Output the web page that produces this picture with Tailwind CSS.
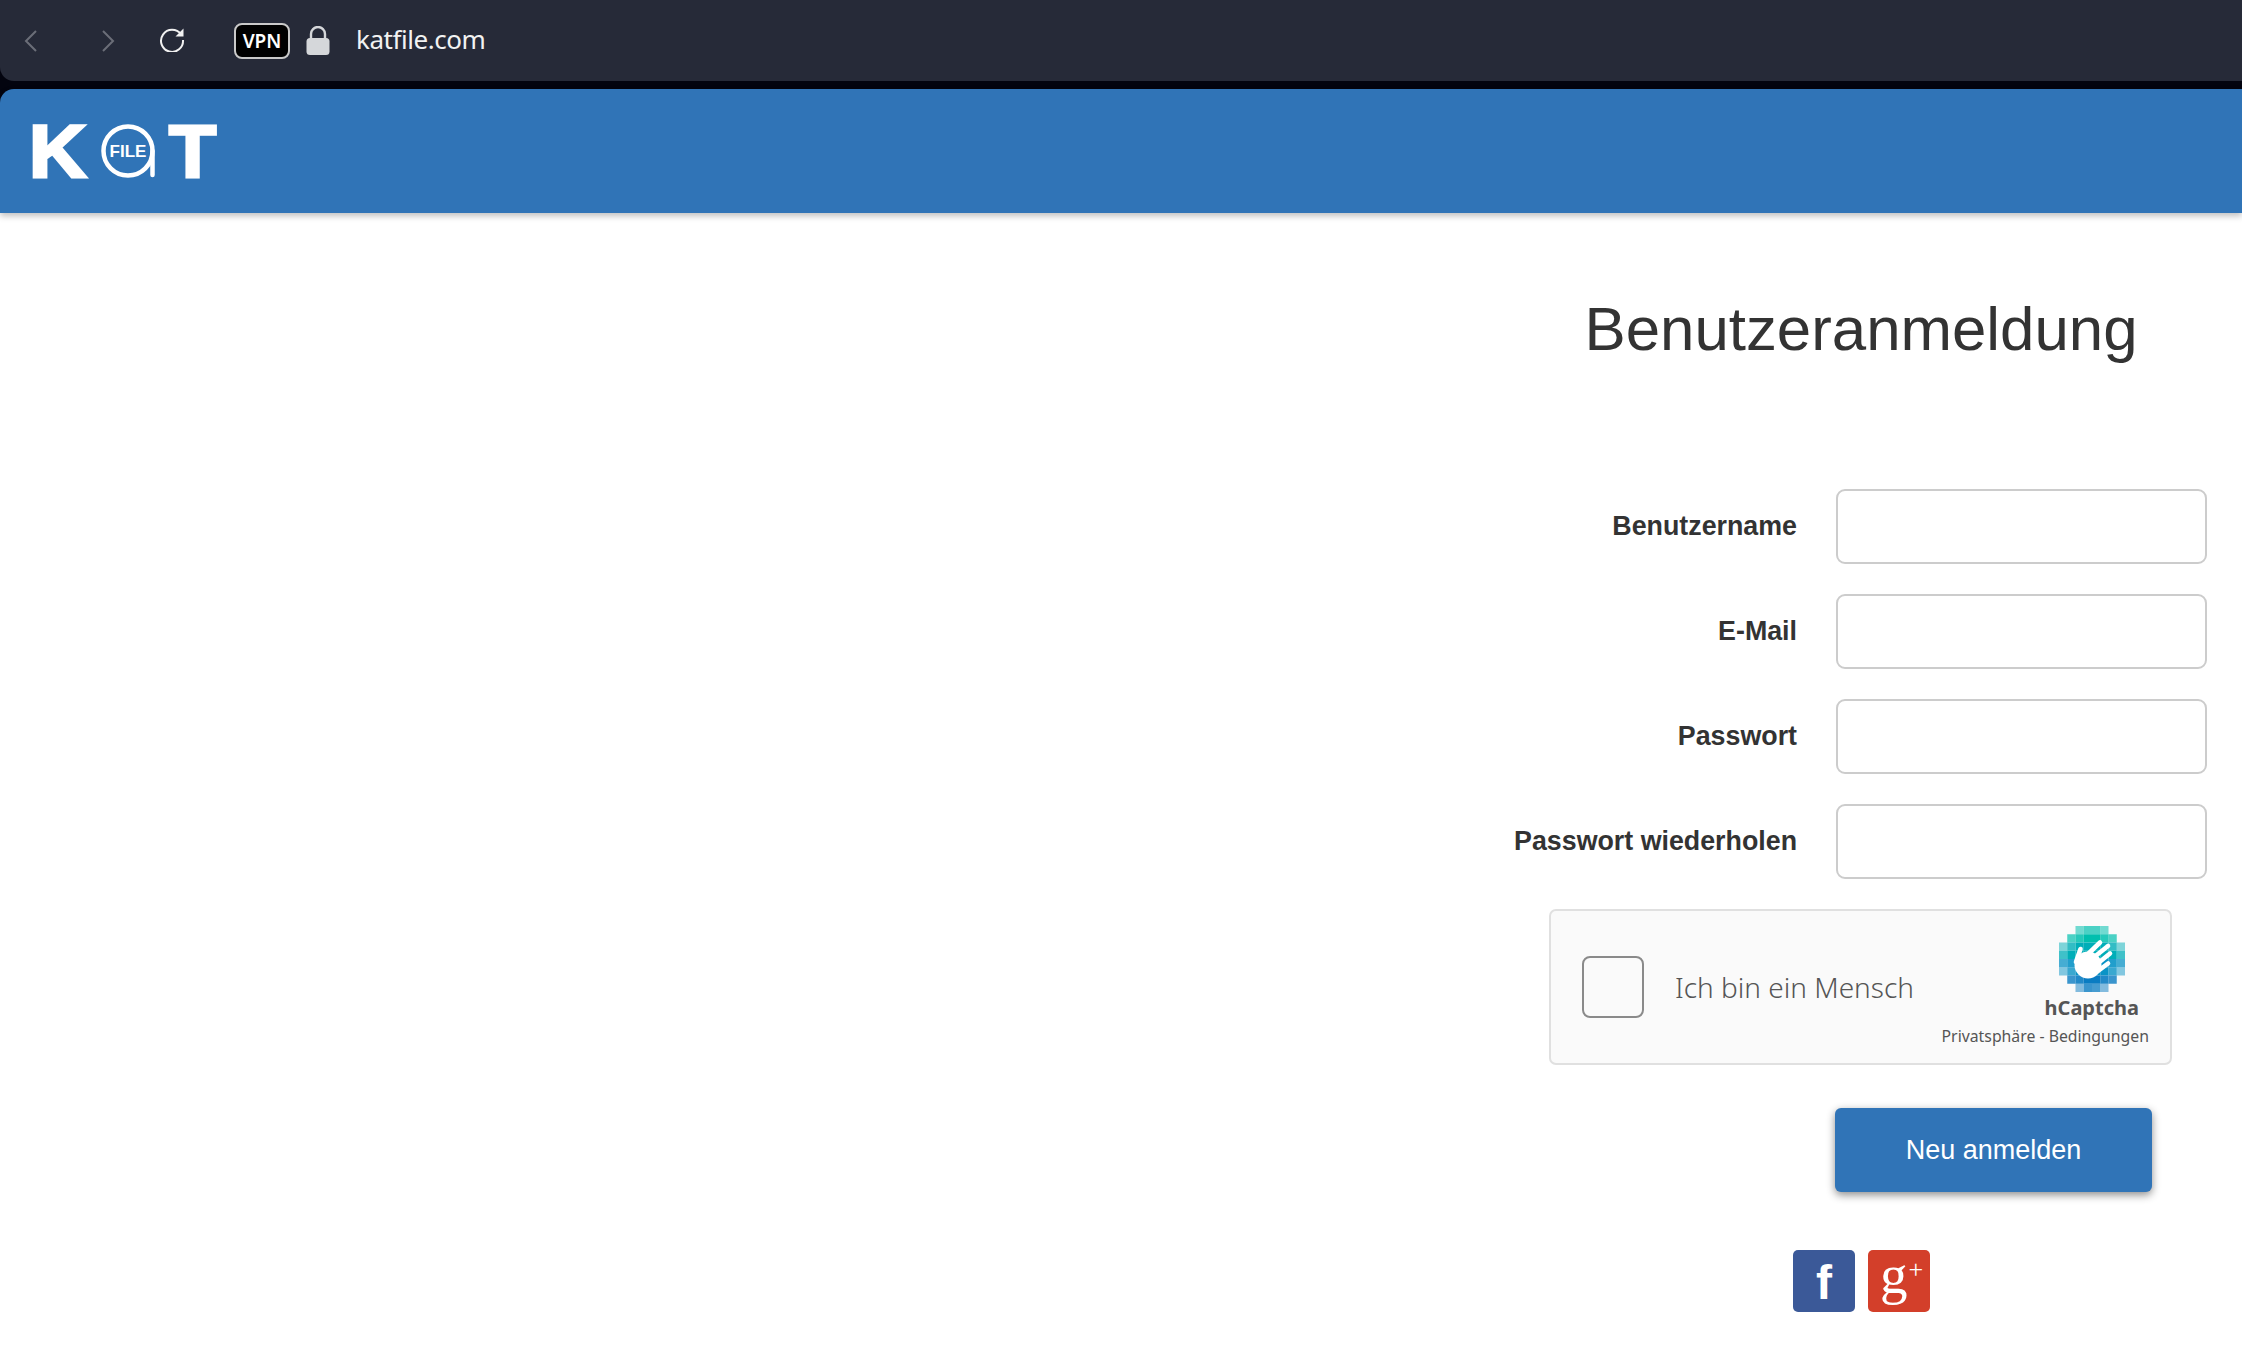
<!DOCTYPE html>
<html lang="de">
  <head>
    <meta charset="UTF-8" />
    <meta name="viewport" content="width=device-width, initial-scale=1.0" />
    <title>Benutzeranmeldung</title>
    <script src="https://cdn.jsdelivr.net/npm/@tailwindcss/browser@4"></script>
  </head>
  <body class="bg-white h-[1352px] overflow-hidden font-['Liberation_Sans',sans-serif] text-[#333]">
    <!-- Browser bar -->
    <div class="bg-[#03040f]">
      <div class="h-[81px] bg-[#262a38] rounded-bl-[14px] flex items-center relative">
        <svg class="ml-[24px] w-[14px] h-[24px] text-[#6b6e78]" viewBox="0 0 14 24" fill="none" stroke="currentColor" stroke-width="2"><path d="M12 2 2 12l10 10" /></svg>
        <svg class="ml-[63px] w-[14px] h-[24px] text-[#6b6e78]" viewBox="0 0 14 24" fill="none" stroke="currentColor" stroke-width="2"><path d="m2 2 10 10L2 22" /></svg>
        <svg class="ml-[44px] -mt-[3px] w-[26px] h-[26px] text-[#f1f1f1]" viewBox="0 0 26 26" fill="none" stroke="currentColor" stroke-width="2">
          <path d="M22 8.5A11 11 0 1 0 24 14" />
          <path d="M24.5 2.5v8h-8z" fill="currentColor" stroke="none" />
        </svg>
        <div class="ml-[49px] w-[56px] h-[36px] pt-[2px] bg-black border-2 border-[#c9c9c9] rounded-[8px] flex items-center justify-center text-white text-[19px] font-semibold font-['Noto_Sans',sans-serif]">VPN</div>
        <svg class="ml-[16px] w-[24px] h-[30px] text-[#d5d7da]" viewBox="0 0 24 30" fill="currentColor">
          <path d="M5 13V8a7 7 0 0 1 14 0v5" fill="none" stroke="currentColor" stroke-width="2.4" />
          <rect x="0.5" y="12" width="23" height="17" rx="3.5" />
        </svg>
        <span class="ml-[26px] -mt-[2px] text-[26px] tracking-[-0.45px] text-[#f2f2f2] font-['Noto_Sans',sans-serif]">katfile.com</span>
      </div>
      <div class="h-[8px]"></div>
      <!-- Site header -->
      <header class="h-[124px] bg-[#3074b7] rounded-tl-[14px] shadow-[0_3px_6px_rgba(0,0,0,0.25)] flex items-center pl-[29px] relative">
        <div class="flex items-center text-white font-bold text-[75px] leading-none [-webkit-text-stroke:3px_white]">
          <span class="w-[72px] inline-block origin-left scale-x-[1.06]">K</span>
          <svg class="w-[54px] h-[56px]" viewBox="0 0 54 56" fill="none">
            <circle cx="27" cy="28" r="24.5" stroke="white" stroke-width="4.5" />
            <path d="M51.5 28v24" stroke="white" stroke-width="4.5" stroke-linecap="round" />
            <text x="27" y="34" text-anchor="middle" fill="white" stroke="none" font-size="17" font-weight="700" font-family="Liberation Sans">FILE</text>
          </svg>
          <span class="ml-[14px] inline-block origin-left scale-x-[1.03]">T</span>
        </div>
      </header>
    </div>

    <!-- Register form -->
    <main class="ml-auto w-[762px]">
      <h1 class="pt-[76px] text-center text-[61.8px] leading-[80px] font-normal">Benutzeranmeldung</h1>
      <form class="mt-[120px]">
        <div class="flex flex-col gap-[30px]">
          <div class="flex items-center justify-end pr-[35px]">
            <label class="mr-[39px] font-bold text-[26.8px]">Benutzername</label>
            <input type="text" class="w-[371px] h-[75px] bg-white border-2 border-[#ccc] rounded-[9px]" />
          </div>
          <div class="flex items-center justify-end pr-[35px]">
            <label class="mr-[39px] font-bold text-[26.8px]">E-Mail</label>
            <input type="text" class="w-[371px] h-[75px] bg-white border-2 border-[#ccc] rounded-[9px]" />
          </div>
          <div class="flex items-center justify-end pr-[35px]">
            <label class="mr-[39px] font-bold text-[26.8px]">Passwort</label>
            <input type="password" class="w-[371px] h-[75px] bg-white border-2 border-[#ccc] rounded-[9px]" />
          </div>
          <div class="flex items-center justify-end pr-[35px]">
            <label class="mr-[39px] font-bold text-[26.8px]">Passwort wiederholen</label>
            <input type="password" class="w-[371px] h-[75px] bg-white border-2 border-[#ccc] rounded-[9px]" />
          </div>
        </div>

        <!-- hCaptcha -->
        <div class="mt-[30px] ml-[69px] w-[623px] h-[156px] bg-[#fafafa] border-2 border-[#e0e0e0] rounded-[7px] flex items-center relative font-['Noto_Sans',sans-serif]">
          <div class="ml-[31px] w-[62px] h-[62px] bg-[#fafafa] border-2 border-[#8a8a8a] rounded-[8px]"></div>
          <span class="ml-[31px] text-[28px] font-light text-[#555]">Ich bin ein Mensch</span>
          <div class="absolute right-[31px] top-[15px] flex flex-col items-center text-[#555]">
            <svg class="w-[66px] h-[66px]" viewBox="0 0 66 66">
              <g fill="#00bfae">
                <rect x="16.5" y="0" width="8.25" height="8.25" opacity=".55" /><rect x="24.75" y="0" width="8.25" height="8.25" opacity=".7" /><rect x="33" y="0" width="8.25" height="8.25" opacity=".7" /><rect x="41.25" y="0" width="8.25" height="8.25" opacity=".55" />
                <rect x="8.25" y="8.25" width="8.25" height="8.25" opacity=".7" /><rect x="16.5" y="8.25" width="8.25" height="8.25" opacity=".85" /><rect x="24.75" y="8.25" width="8.25" height="8.25" /><rect x="33" y="8.25" width="8.25" height="8.25" /><rect x="41.25" y="8.25" width="8.25" height="8.25" opacity=".85" /><rect x="49.5" y="8.25" width="8.25" height="8.25" opacity=".7" />
              </g>
              <g fill="#00aeb8">
                <rect x="0" y="16.5" width="8.25" height="8.25" opacity=".5" /><rect x="8.25" y="16.5" width="8.25" height="8.25" opacity=".8" /><rect x="16.5" y="16.5" width="8.25" height="8.25" /><rect x="24.75" y="16.5" width="8.25" height="8.25" /><rect x="33" y="16.5" width="8.25" height="8.25" /><rect x="41.25" y="16.5" width="8.25" height="8.25" /><rect x="49.5" y="16.5" width="8.25" height="8.25" opacity=".8" /><rect x="57.75" y="16.5" width="8.25" height="8.25" opacity=".5" />
                <rect x="0" y="24.75" width="8.25" height="8.25" opacity=".75" /><rect x="8.25" y="24.75" width="8.25" height="8.25" /><rect x="16.5" y="24.75" width="8.25" height="8.25" /><rect x="24.75" y="24.75" width="8.25" height="8.25" /><rect x="33" y="24.75" width="8.25" height="8.25" /><rect x="41.25" y="24.75" width="8.25" height="8.25" /><rect x="49.5" y="24.75" width="8.25" height="8.25" /><rect x="57.75" y="24.75" width="8.25" height="8.25" opacity=".75" />
              </g>
              <g fill="#0a93c6">
                <rect x="0" y="33" width="8.25" height="8.25" opacity=".75" /><rect x="8.25" y="33" width="8.25" height="8.25" opacity=".9" /><rect x="16.5" y="33" width="8.25" height="8.25" /><rect x="24.75" y="33" width="8.25" height="8.25" /><rect x="33" y="33" width="8.25" height="8.25" /><rect x="41.25" y="33" width="8.25" height="8.25" /><rect x="49.5" y="33" width="8.25" height="8.25" opacity=".9" /><rect x="57.75" y="33" width="8.25" height="8.25" opacity=".75" />
                <rect x="0" y="41.25" width="8.25" height="8.25" opacity=".5" /><rect x="8.25" y="41.25" width="8.25" height="8.25" opacity=".8" /><rect x="16.5" y="41.25" width="8.25" height="8.25" /><rect x="24.75" y="41.25" width="8.25" height="8.25" /><rect x="33" y="41.25" width="8.25" height="8.25" /><rect x="41.25" y="41.25" width="8.25" height="8.25" /><rect x="49.5" y="41.25" width="8.25" height="8.25" opacity=".8" /><rect x="57.75" y="41.25" width="8.25" height="8.25" opacity=".5" />
              </g>
              <g fill="#0a7cc2">
                <rect x="8.25" y="49.5" width="8.25" height="8.25" opacity=".8" /><rect x="16.5" y="49.5" width="8.25" height="8.25" opacity=".9" /><rect x="24.75" y="49.5" width="8.25" height="8.25" /><rect x="33" y="49.5" width="8.25" height="8.25" /><rect x="41.25" y="49.5" width="8.25" height="8.25" opacity=".9" /><rect x="49.5" y="49.5" width="8.25" height="8.25" opacity=".8" />
                <rect x="16.5" y="57.75" width="8.25" height="8.25" opacity=".5" /><rect x="24.75" y="57.75" width="8.25" height="8.25" opacity=".8" /><rect x="33" y="57.75" width="8.25" height="8.25" opacity=".75" /><rect x="41.25" y="57.75" width="8.25" height="8.25" opacity=".5" />
              </g>
              <circle cx="29" cy="39" r="13.5" fill="white" />
              <g stroke="white" stroke-width="4.6" stroke-linecap="round">
                <path d="M17 36 21.5 23" />
                <path d="M27 30 41 16.5" />
                <path d="M34 32 49 20" />
                <path d="M38 38 51 27.5" />
                <path d="M39 45 49 37.5" />
              </g>
            </svg>
            <span class="mt-[2px] text-[20px] leading-[28px] font-bold">hCaptcha</span>
          </div>
          <span class="absolute right-[21px] bottom-[16px] text-[15.8px] leading-[22px] text-[#555]">Privatsphäre - Bedingungen</span>
        </div>

        <button type="button" class="block mt-[43px] ml-[355px] w-[317px] h-[84px] bg-[#3074b7] rounded-[6px] text-white text-[27px] shadow-[0_3px_9px_rgba(0,0,0,0.45)]">Neu anmelden</button>

        <div class="mt-[58px] ml-[313px] flex gap-[13px]">
          <a class="w-[62px] h-[62px] rounded-[5px] bg-[#3b5998] flex items-center justify-center text-white font-bold text-[48px] leading-none pt-[4px]">f</a>
          <a class="w-[62px] h-[62px] rounded-[5px] bg-[#d33f2a] flex items-start text-white font-['Liberation_Serif',serif] text-[55px] leading-none pl-[12px]"><span class="-mt-[3px]">g</span><span class="text-[26px] leading-none mt-[7px] ml-[1px] font-light">+</span></a>
        </div>
      </form>
    </main>
  </body>
</html>
